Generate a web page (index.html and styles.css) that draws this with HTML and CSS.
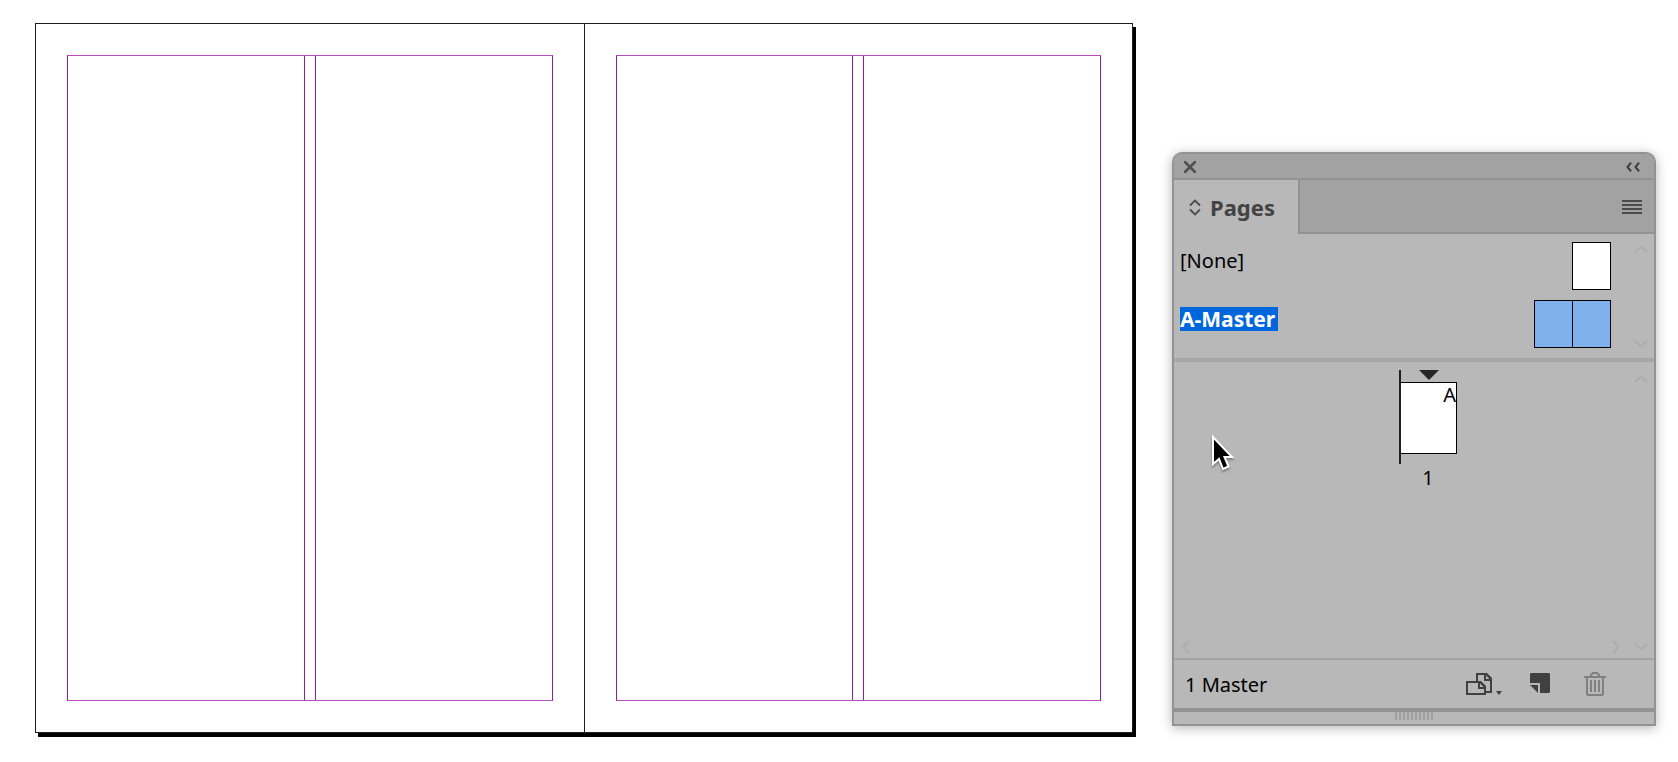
FILE: index.html
```html
<!DOCTYPE html>
<html lang="en">
  <head>
    <meta charset="utf-8">
    <title>Pages</title>
    <link rel="stylesheet" href="styles.css">
  </head>
  <body>
    <main class="workspace">
      <div class="spread">
        <div class="page">
          <div class="margins"><div class="gutter"></div></div>
        </div>
        <div class="page">
          <div class="margins"><div class="gutter"></div></div>
        </div>
      </div>

      <section class="panel">
        <header class="titlebar">
          <button class="icon-btn" aria-label="Close">
            <svg width="12" height="12" viewBox="0 0 12 12"><path d="M1 1l10 10M11 1L1 11" stroke="#505050" stroke-width="2.5" stroke-linecap="round" fill="none"/></svg>
          </button>
          <button class="icon-btn" aria-label="Collapse">
            <svg width="14" height="10" viewBox="0 0 14 10"><path d="M5 .7L1.500 5 5 9.300M13 .7L9.500 5 13 9.300" stroke="#3c3c3c" stroke-width="2" fill="none"/></svg>
          </button>
        </header>

        <div class="tabbar">
          <button class="tab">
            <svg width="12" height="18" viewBox="0 0 12 18"><path d="M1 7.500L6 2.500l5 5M1 11.500l5 5 5-5" stroke="#4c4c4c" stroke-width="1.800" fill="none"/></svg>
            Pages
          </button>
          <button class="icon-btn" aria-label="Panel menu">
            <svg width="20" height="14" viewBox="0 0 20 14"><path d="M0 1h20M0 5h20M0 9h20M0 13h20" stroke="#4c4c4c" stroke-width="2"/></svg>
          </button>
        </div>

        <div class="masters">
          <div class="master-list">
            <div class="master-row">
              <span class="master-name">[None]</span>
              <div class="thumb"><span></span></div>
            </div>
            <div class="master-row">
              <input class="master-name selected" type="text" value="A-Master" aria-label="Master name">
              <div class="thumb active"><span></span><span></span></div>
            </div>
          </div>
          <div class="vscroll">
            <button class="icon-btn" aria-label="Scroll up"><svg width="14" height="8" viewBox="0 0 14 8"><path class="arrow" d="M1 7l6-5.500L13 7"/></svg></button>
            <button class="icon-btn" aria-label="Scroll down"><svg width="14" height="8" viewBox="0 0 14 8"><path class="arrow" d="M1 1l6 5.500L13 1"/></svg></button>
          </div>
        </div>

        <div class="document">
          <div class="document-main">
            <div class="document-spread">
              <div class="verso"></div>
              <div class="recto">
                <svg width="20" height="10" viewBox="0 0 20 10"><path d="M0 0h20L10 10z" fill="#262626"/></svg>
                <div class="page-thumb">A</div>
              </div>
              <div class="page-number">1</div>
            </div>
            <div class="hscroll">
              <button class="icon-btn" aria-label="Scroll left"><svg width="8" height="14" viewBox="0 0 8 14"><path class="arrow" d="M7 1L1.500 7 7 13"/></svg></button>
              <button class="icon-btn" aria-label="Scroll right"><svg width="8" height="14" viewBox="0 0 8 14"><path class="arrow" d="M1 1l5.500 6L1 13"/></svg></button>
            </div>
          </div>
          <div class="vscroll">
            <button class="icon-btn" aria-label="Scroll up"><svg width="14" height="8" viewBox="0 0 14 8"><path class="arrow" d="M1 7l6-5.500L13 7"/></svg></button>
            <button class="icon-btn" aria-label="Scroll down"><svg width="14" height="8" viewBox="0 0 14 8"><path class="arrow" d="M1 1l6 5.500L13 1"/></svg></button>
          </div>
        </div>

        <footer class="footer">
          <span>1 Master</span>
          <div class="actions">
            <button class="icon-btn" aria-label="Edit page size">
              <svg width="36" height="24" viewBox="0 0 36 24">
                <g fill="none" stroke="#404040" stroke-width="2">
                  <path d="M11 10V2h9l5 5v13h-5"/>
                  <path d="M1 10h13l5 5v7H1z"/>
                </g>
                <path d="M18 1h3l5 5v3h-8zM12 9h3l5 5v3h-8z" fill="#404040"/>
                <path d="M20 3.500V7h3.500zM14 11.500V15h3.500z" fill="#b8b8b8"/>
                <path d="M30 19h6l-3 4z" fill="#404040"/>
              </svg>
            </button>
            <button class="icon-btn" aria-label="Create new page">
              <svg width="20" height="24" viewBox="0 0 20 24"><path d="M1 1h18l1 1v18l-1 1h-9V11H0V2z" fill="#404040"/><path d="M0 13h8v8z" fill="#404040"/></svg>
            </button>
            <button class="icon-btn" aria-label="Delete selected pages">
              <svg width="22" height="24" viewBox="0 0 22 24">
                <g fill="none" stroke="#808080" stroke-width="2">
                  <path d="M0 5h22M3 5v17l1 1h14l1-1V5M7 5V3l2-2h4l2 2v2"/>
                  <path d="M7 8v12M11 8v12M15 8v12"/>
                </g>
              </svg>
            </button>
          </div>
        </footer>
        <div class="grip">
          <svg width="38" height="8" viewBox="0 0 38 8"><path d="M1 0v8M5 0v8M9 0v8M13 0v8M17 0v8M21 0v8M25 0v8M29 0v8M33 0v8M37 0v8" stroke="#a0a0a0" stroke-width="2"/></svg>
        </div>

        <svg class="cursor" width="26" height="40" viewBox="0 0 26 40">
          <path d="M1 2v27l6-5 4 10 5.500-2.500L12.500 22H20z" fill="#000" stroke="#fff" stroke-width="2"/>
        </svg>
      </section>
    </main>
  </body>
</html>
```

FILE: styles.css
```css
* {
  box-sizing: border-box;
}

body {
  margin: 0;
  background: #fff;
  color: #000;
  font-family: "Noto Sans", sans-serif;
  font-size: 20px;
  line-height: 24px;
}

button,
input {
  font: inherit;
  color: inherit;
  border: none;
  padding: 0;
  background: none;
}

svg {
  display: block;
}

.workspace {
  display: flex;
  align-items: flex-start;
  gap: 39px;
  padding: 23px 22px 23px 35px;
}

/* document spread */
.spread {
  flex: 1;
  display: flex;
  aspect-ratio: 1098 / 710;
  border: 1px solid #1e1e1e;
  box-shadow: 3px 4px 0 #000;
}

.page {
  box-sizing: content-box;
  flex: 1;
  display: flex;
  padding: 31px;
}

.page + .page {
  border-left: 1px solid #1e1e1e;
}

.margins {
  flex: 1;
  display: flex;
  justify-content: center;
  border: 1px solid #8422b4;
  border-top-color: #b84cc0;
  border-bottom-color: #b84cc0;
}

.gutter {
  width: 12px;
  border: 1px solid #8422b4;
  border-width: 0 1px;
}

/* pages panel */
.panel {
  position: relative;
  width: 484px;
  margin-top: 129px;
  border: 2px solid #939393;
  border-radius: 10px 10px 0 0;
  background: #b8b8b8;
  box-shadow: 0 2px 12px rgba(0, 0, 0, 0.3);
}

.icon-btn {
  cursor: pointer;
}

.titlebar {
  display: flex;
  justify-content: space-between;
  align-items: center;
  height: 26px;
  padding: 2px 14px 0 10px;
  border-bottom: 2px solid #939393;
  border-radius: 8px 8px 0 0;
  background: #a2a2a2;
}

.tabbar {
  display: flex;
  height: 54px;
  background: #a2a2a2;
}

.tab {
  display: flex;
  align-items: center;
  gap: 9px;
  width: 124px;
  padding-left: 15px;
  background: #b8b8b8;
  color: #434343;
  font-size: 22px;
  font-weight: bold;
}

.tabbar .icon-btn {
  flex: 1;
  display: flex;
  justify-content: flex-end;
  align-items: center;
  padding: 2px 12px 0 0;
  border-left: 2px solid #939393;
  border-bottom: 2px solid #939393;
}

.masters {
  display: flex;
  border-bottom: 4px solid #a6a6a6;
}

.master-list {
  flex: 1;
  display: flex;
  flex-direction: column;
  gap: 10px;
  padding: 8px 17px 10px 6px;
}

.master-row {
  display: flex;
  justify-content: space-between;
}

.master-name {
  height: 24px;
  margin-top: 7px;
}

.selected {
  width: 98px;
  background: #0066dc;
  color: #fff;
  font-size: 21px;
  font-weight: bold;
}

.thumb {
  display: flex;
  height: 48px;
  border: 1px solid #000;
  background: #fff;
}

.thumb span {
  width: 37px;
}

.thumb span + span {
  width: 38px;
  border-left: 1px solid #000;
}

.thumb.active {
  background: #7fb2ec;
}

.vscroll {
  display: flex;
  flex-direction: column;
  justify-content: space-between;
  align-items: center;
  width: 26px;
  padding: 11px 0 10px;
}

.arrow {
  fill: none;
  stroke: #adadad;
  stroke-width: 2;
}

.document {
  display: flex;
  min-height: 298px;
  border-bottom: 2px solid #a4a4a4;
}

.document .vscroll {
  padding: 13px 0 7px;
}

.document-main {
  flex: 1;
  display: flex;
  flex-direction: column;
  justify-content: space-between;
}

.document-spread {
  display: grid;
  grid-template-columns: 1fr 1fr;
  row-gap: 2px;
  padding-top: 8px;
}

.verso {
  border-right: 2px solid #202020;
}

.recto {
  display: flex;
  flex-direction: column;
  align-items: center;
  gap: 2px;
  width: 56px;
  padding-bottom: 10px;
}

.page-thumb {
  width: 100%;
  height: 72px;
  border: 1px solid #000;
  border-left: none;
  background: #fff;
  text-align: right;
}

.page-number {
  grid-column: 2;
  width: 54px;
  text-align: center;
}

.hscroll {
  display: flex;
  justify-content: space-between;
  padding: 0 8px 4px;
}

.footer {
  display: flex;
  justify-content: space-between;
  align-items: center;
  height: 52px;
  padding: 0 48px 0 11px;
  border-bottom: 4px solid #939393;
}

.footer span {
  padding-top: 2px;
}

.actions {
  display: flex;
  align-items: center;
  gap: 34px;
}

.actions .icon-btn:first-child {
  margin-right: -6px;
}

.grip {
  display: flex;
  justify-content: center;
  height: 12px;
}

.cursor {
  position: absolute;
  left: 38px;
  top: 281px;
  filter: drop-shadow(0 2px 1px rgba(0, 0, 0, 0.35));
}
```
